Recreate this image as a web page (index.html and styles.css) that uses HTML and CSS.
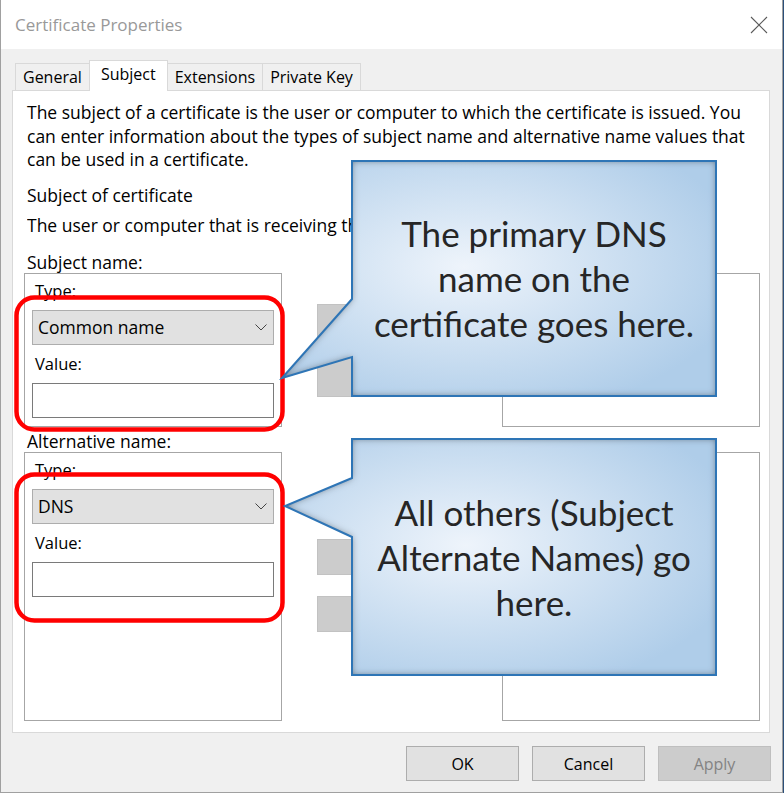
FILE: index.html
```html
<!DOCTYPE html>
<html lang="en">
<head>
    <meta charset="UTF-8">
    <title>Certificate Properties</title>
    <link rel="stylesheet" href="styles.css">
</head>
<body>
    <div class="window">
        <div class="titlebar">
            <span class="title">Certificate Properties</span>
            <svg class="close" width="18" height="18" viewBox="0 0 18 18">
                <path d="M1 1 L17 17 M17 1 L1 17" stroke="#5a5a5a" stroke-width="1.1" fill="none"/>
            </svg>
        </div>

        <div class="client">
            <div class="tabs">
                <div class="tab">General</div>
                <div class="tab active">Subject</div>
                <div class="tab">Extensions</div>
                <div class="tab">Private Key</div>
            </div>

            <div class="panel">
                <p class="intro">The subject of a certificate is the user or computer to which the certificate is issued. You can enter information about the types of subject name and alternative name values that can be used in a certificate.</p>

                <div class="caption">Subject of certificate</div>
                <div class="hint">The user or computer that is receiving the certificate</div>

                <div class="name-row">
                    <div class="name-col">
                        <div class="group-label">Subject name:</div>
                        <div class="group-box short">
                            <div class="field-label">Type:</div>
                            <div class="combo">
                                <span>Common name</span>
                                <svg width="12" height="7" viewBox="0 0 12 7"><path d="M0.5 0.5 L6 6 L11.5 0.5" stroke="#444" fill="none"/></svg>
                            </div>
                            <div class="field-label">Value:</div>
                            <div class="text-input"></div>
                        </div>
                    </div>
                    <div class="btn-col">
                        <div class="gray-btn first"></div>
                    </div>
                    <div class="list-box short"></div>
                </div>

                <div class="name-row alt">
                    <div class="name-col">
                        <div class="group-label">Alternative name:</div>
                        <div class="group-box tall">
                            <div class="field-label">Type:</div>
                            <div class="combo">
                                <span>DNS</span>
                                <svg width="12" height="7" viewBox="0 0 12 7"><path d="M0.5 0.5 L6 6 L11.5 0.5" stroke="#444" fill="none"/></svg>
                            </div>
                            <div class="field-label">Value:</div>
                            <div class="text-input"></div>
                        </div>
                    </div>
                    <div class="btn-col alt-btns">
                        <div class="gray-btn"></div>
                        <div class="gray-btn"></div>
                    </div>
                    <div class="list-box tall"></div>
                </div>
            </div>

            <div class="actions">
                <button>OK</button>
                <button>Cancel</button>
                <button disabled>Apply</button>
            </div>
        </div>
    </div>

    <!-- annotations drawn over the dialog -->
    <svg class="marks" width="784" height="793" viewBox="0 0 784 793">
        <defs>
            <radialGradient id="calloutFill" cx="0.42" cy="0.45" r="0.65">
                <stop offset="0" stop-color="#eef4fb"/>
                <stop offset="1" stop-color="#afcde9"/>
            </radialGradient>
            <filter id="innerShadow" x="-10%" y="-10%" width="120%" height="120%">
                <feFlood flood-color="#2a2a2a" flood-opacity="0.85" result="ink"/>
                <feComposite in="ink" in2="SourceAlpha" operator="out" result="outside"/>
                <feGaussianBlur in="outside" stdDeviation="3.5" result="blur"/>
                <feComposite in="blur" in2="SourceAlpha" operator="in" result="shadow"/>
                <feMerge>
                    <feMergeNode in="SourceGraphic"/>
                    <feMergeNode in="shadow"/>
                </feMerge>
            </filter>
        </defs>

        <rect x="16.5" y="297.5" width="266" height="132" rx="18" fill="none" stroke="#ff0000" stroke-width="4.5"/>
        <rect x="16.5" y="474.5" width="266" height="146" rx="18" fill="none" stroke="#ff0000" stroke-width="4.5"/>

        <path d="M352 161 H716 V396 H352 V357 L282 378 L352 299 Z" fill="url(#calloutFill)" filter="url(#innerShadow)"/>
        <path d="M352 161 H716 V396 H352 V357 L282 378 L352 299 Z" fill="none" stroke="#2e75b6" stroke-width="2"/>

        <path d="M352 439 H716 V675 H352 V537 L285 506 L352 478 Z" fill="url(#calloutFill)" filter="url(#innerShadow)"/>
        <path d="M352 439 H716 V675 H352 V537 L285 506 L352 478 Z" fill="none" stroke="#2e75b6" stroke-width="2"/>
    </svg>

    <div class="callout-text one">The primary DNS<br>name on the<br>certificate goes here.</div>
    <div class="callout-text two">All others (Subject<br>Alternate Names) go<br>here.</div>
</body>
</html>
```

FILE: styles.css
```css
body {
    margin: 0;
    position: relative;
    width: 784px;
    height: 793px;
    overflow: hidden;
    background: #2b4f7a;
    font-family: "Open Sans", "Noto Sans", sans-serif;
    font-size: 16px;
    color: #000;
}

.window {
    width: 781px;
    height: 792px;
    border-left: 1px solid #a0a0a0;
    border-right: 1px solid #a0a0a0;
    border-bottom: 1px solid #a0a0a0;
    background: #f0f0f0;
    display: flex;
    flex-direction: column;
}

.titlebar {
    height: 49px;
    background: #fff;
    display: flex;
    align-items: center;
    justify-content: space-between;
    padding: 0 14px 0 14px;
}

.title {
    font-size: 17px;
    color: #999;
    padding-bottom: 1px;
}

.client {
    flex: 1;
    display: flex;
    flex-direction: column;
}

.tabs {
    display: flex;
    align-items: flex-end;
    height: 30px;
    margin-top: 11px;
    padding-left: 14px;
}

.tab {
    height: 26px;
    line-height: 26px;
    padding: 0 7px;
    border: 1px solid #d9d9d9;
    border-bottom: none;
    margin-left: -1px;
    background: #f0f0f0;
}

.tab:first-child {
    margin-left: 0;
}

.tab.active {
    position: relative;
    z-index: 1;
    height: 30px;
    line-height: 26px;
    padding: 0 11px;
    margin-bottom: -1px;
    background: #fff;
}

.panel {
    height: 621px;
    margin: 0 12px 0 11px;
    padding: 10px 0 10px 0;
    border: 1px solid #d9d9d9;
    background: #fff;
    font-size: 17.5px;
}

.intro {
    margin: 0 0 0 14px;
    width: 726px;
    line-height: 23.5px;
}

.caption {
    margin: 12px 0 0 14px;
    line-height: 22px;
}

/* the rest of this line sits under the first callout */
.hint {
    margin: 8px 0 0 14px;
    width: 324px;
    line-height: 22px;
    white-space: nowrap;
    overflow: hidden;
}

.name-row {
    display: flex;
    margin: 15px 0 0 11px;
}

.name-row.alt {
    margin-top: 3px;
}

.name-col {
    width: 258px;
}

.group-label {
    line-height: 22px;
    padding-left: 3px;
}

.group-box {
    box-sizing: border-box;
    border: 1px solid #a6a6a6;
    padding: 7px 7px 0 7px;
}

.group-box.short {
    height: 154px;
}

.group-box.tall {
    height: 269px;
}

.field-label {
    line-height: 20px;
    padding-left: 3px;
    margin-bottom: 9px;
    font-size: 16.5px;
}

.combo {
    box-sizing: border-box;
    height: 35px;
    border: 1px solid #adadad;
    background: #e1e1e1;
    display: flex;
    align-items: center;
    justify-content: space-between;
    padding: 0 6px 0 5px;
    margin-bottom: 9px;
}

.text-input {
    box-sizing: border-box;
    height: 35px;
    border: 1px solid #7a7a7a;
    background: #fff;
}

.btn-col {
    width: 150px;
    margin-left: 35px;
    padding-top: 53px;
}

.alt-btns {
    padding-top: 109px;
}

.gray-btn {
    box-sizing: border-box;
    height: 36px;
    margin-bottom: 21px;
    background: #cccccc;
    border: 1px solid #c2c2c2;
}

.gray-btn.first {
    height: 93px;
}

.list-box {
    box-sizing: border-box;
    width: 258px;
    margin-left: 35px;
    margin-top: 22px;
    border: 1px solid #a6a6a6;
}

.list-box.short {
    height: 154px;
}

.list-box.tall {
    height: 269px;
}

.actions {
    display: flex;
    justify-content: flex-end;
    gap: 13px;
    margin-top: 13px;
    padding-right: 11px;
}

.actions button {
    width: 113px;
    height: 35px;
    font-family: inherit;
    font-size: 16px;
    color: #000;
    background: #e1e1e1;
    border: 1px solid #adadad;
    padding: 0;
}

.actions button:disabled {
    background: #cccccc;
    border-color: #bfbfbf;
    color: #838383;
}

.marks {
    position: absolute;
    left: 0;
    top: 0;
    pointer-events: none;
}

.callout-text {
    position: absolute;
    left: 352px;
    width: 364px;
    display: flex;
    align-items: center;
    justify-content: center;
    text-align: center;
    font-family: Lato, "Open Sans", sans-serif;
    font-size: 35px;
    line-height: 45px;
    color: #262626;
}

.callout-text.one {
    top: 161px;
    height: 235px;
}

.callout-text.two {
    top: 439px;
    height: 236px;
}
```
